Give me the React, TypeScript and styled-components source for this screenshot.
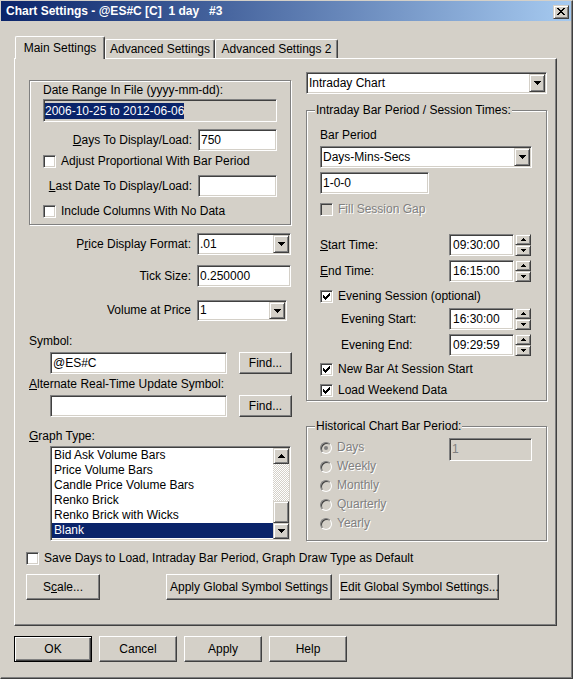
import React from 'react';
import styled, { createGlobalStyle, css } from 'styled-components';

const FACE = '#d4d0c8';
const SHADOW = '#808080';
const DARK = '#404040';
const NAVY = '#0a246a';

const GlobalStyle = createGlobalStyle`
  * { box-sizing: border-box; }
  html, body { margin: 0; padding: 0; background: ${FACE}; }
  body {
    font-family: "Liberation Sans", Arial, sans-serif;
    font-size: 12px;
    line-height: 15px;
    color: #000;
  }
`;

// classic 3D edges
const pushRaised = css`
  border: 1px solid;
  border-color: #fff ${DARK} ${DARK} #fff;
  box-shadow: inset -1px -1px ${SHADOW};
`;
const smallRaised = css`
  border: 1px solid;
  border-color: ${FACE} ${DARK} ${DARK} ${FACE};
  box-shadow: inset 1px 1px #fff, inset -1px -1px ${SHADOW};
`;
const sunken = css`
  border: 1px solid;
  border-color: ${SHADOW} #fff #fff ${SHADOW};
  box-shadow: inset 1px 1px ${DARK}, inset -1px -1px ${FACE};
`;
const etched = css`
  border: 1px solid ${SHADOW};
  box-shadow: inset 1px 1px #fff, 1px 1px #fff;
`;
const grayed = css`
  color: ${SHADOW};
  text-shadow: 1px 1px 0 #fff;
`;

// little bitmaps
const CHECK = ['......x', '.....xx', 'x...xxx', 'xx.xxx.', 'xxxxx..', '.xxx...', '..x....'];
const CLOSE_X = ['xx....xx', '.xx..xx.', '..xxxx..', '...xx...', '..xxxx..', '.xx..xx.', 'xx....xx'];
const ARROW_DOWN = ['xxxxxxx', '.xxxxx.', '..xxx..', '...x...'];
const ARROW_UP = [...ARROW_DOWN].reverse();
const SPIN_UP = ['..x..', '.xxx.', 'xxxxx'];
const SPIN_DOWN = [...SPIN_UP].reverse();

const PixelSvg = styled.svg`
  display: block;
  flex: none;
`;

const Pixels = ({ rows, color = '#000' }: { rows: string[]; color?: string }) => (
  <PixelSvg width={rows[0].length} height={rows.length} shapeRendering="crispEdges">
    {rows.flatMap((r, y) =>
      r.split('').map((c, x) =>
        c === 'x' ? <rect key={`${x}-${y}`} x={x} y={y} width={1} height={1} fill={color} /> : null
      )
    )}
  </PixelSvg>
);

const Window = styled.div`
  width: 573px;
  height: 679px;
  background: ${FACE};
  border-right: 1px solid ${DARK};
  border-bottom: 1px solid ${DARK};
  border-left: 1px solid ${FACE};
  border-top: 1px solid ${FACE};
  box-shadow: inset -1px -1px ${SHADOW};
  padding: 0 1px 1px 0;
  display: flex;
  flex-direction: column;
`;

const TitleBar = styled.div`
  height: 20px;
  flex: none;
  background: linear-gradient(to right, ${NAVY}, #a6caf0);
  display: flex;
  align-items: center;
  justify-content: space-between;
  padding: 1px 2px 0 5px;
`;

const Title = styled.span`
  color: #fff;
  font-weight: bold;
  white-space: pre;
`;

const CloseButton = styled.span`
  ${smallRaised};
  width: 16px;
  height: 14px;
  background: ${FACE};
  display: flex;
  align-items: center;
  justify-content: center;
`;

const Body = styled.div`
  padding: 15px 0 0 13px;
  display: flex;
  flex-direction: column;
`;

const TabStrip = styled.div`
  height: 23px;
  display: flex;
  align-items: flex-end;
  padding-left: 1px;
`;

const Tab = styled.div<{ $active?: boolean; $w: number }>`
  width: ${p => p.$w}px;
  height: ${p => (p.$active ? 23 : 19)}px;
  margin-bottom: ${p => (p.$active ? 0 : 1)}px;
  display: flex;
  align-items: center;
  justify-content: center;
  white-space: nowrap;
  background: ${FACE};
  border-top: 1px solid #fff;
  border-left: 1px solid #fff;
  border-right: 1px solid ${DARK};
  box-shadow: inset -1px 0 ${SHADOW};
  border-radius: 2px 2px 0 0;
  position: relative;
  z-index: ${p => (p.$active ? 1 : 0)};
`;

const Panel = styled.div`
  width: 543px;
  height: 568px;
  margin-top: -1px;
  border: 1px solid;
  border-color: #fff ${DARK} ${DARK} #fff;
  box-shadow: inset -1px -1px ${SHADOW};
  display: flex;
  flex-direction: column;
`;

const Columns = styled.div`
  display: grid;
  grid-template-columns: 262px 241px;
  column-gap: 15px;
  padding-left: 14px;
  align-items: start;
`;

const Column = styled.div<{ $top: number }>`
  display: flex;
  flex-direction: column;
  margin-top: ${p => p.$top}px;
`;

const GroupBox = styled.div<{ $mt?: number; $h: number }>`
  ${etched};
  margin-top: ${p => p.$mt ?? 0}px;
  height: ${p => p.$h}px;
  padding: 0 13px;
  display: flex;
  flex-direction: column;
`;

const Legend = styled.div`
  align-self: flex-start;
  margin: -8px 0 0 -5px;
  padding: 0 1px;
  height: 15px;
  background: ${FACE};
  white-space: nowrap;
`;

const Caption = styled.div<{ $mt: number; $ml?: number }>`
  margin-top: ${p => p.$mt}px;
  margin-left: ${p => p.$ml ?? 0}px;
  height: 15px;
  white-space: nowrap;
`;

const FieldRow = styled.div<{ $mt: number; $ml?: number }>`
  display: flex;
  align-items: center;
  margin-top: ${p => p.$mt}px;
  margin-left: ${p => p.$ml ?? 0}px;
`;

const RightLabel = styled.span<{ $w: number }>`
  flex: none;
  width: ${p => p.$w}px;
  margin-right: 6px;
  text-align: right;
  white-space: nowrap;
`;

const LeftLabel = styled.span<{ $w: number; $indent?: number }>`
  flex: none;
  width: ${p => p.$w}px;
  padding-left: ${p => p.$indent ?? 0}px;
  white-space: nowrap;
`;

const TextBox = styled.div<{
  $w: number;
  $h?: number;
  $mt?: number;
  $pl?: number;
  $face?: boolean;
  $disabled?: boolean;
}>`
  ${sunken};
  flex: none;
  width: ${p => p.$w}px;
  height: ${p => p.$h ?? 22}px;
  margin-top: ${p => p.$mt ?? 0}px;
  padding-left: ${p => p.$pl ?? 2}px;
  background: ${p => (p.$face || p.$disabled ? FACE : '#fff')};
  color: ${p => (p.$disabled ? SHADOW : '#000')};
  display: flex;
  align-items: center;
  white-space: nowrap;
  overflow: hidden;
`;

const Selection = styled.span`
  background: ${NAVY};
  color: #fff;
  line-height: 16px;
`;

const ComboFrame = styled.div<{ $w: number; $h?: number; $mt?: number }>`
  ${sunken};
  flex: none;
  width: ${p => p.$w}px;
  height: ${p => p.$h ?? 22}px;
  margin-top: ${p => p.$mt ?? 0}px;
  padding: 1px;
  background: #fff;
  display: flex;
`;

const ComboText = styled.span`
  flex: 1;
  padding-left: 1px;
  display: flex;
  align-items: center;
  white-space: nowrap;
`;

const DropButton = styled.span`
  ${smallRaised};
  width: 16px;
  flex: none;
  background: ${FACE};
  display: flex;
  align-items: center;
  justify-content: center;
`;

const Combo = ({ value, w, h, mt }: { value: string; w: number; h?: number; mt?: number }) => (
  <ComboFrame $w={w} $h={h} $mt={mt}>
    <ComboText>{value}</ComboText>
    <DropButton>
      <Pixels rows={ARROW_DOWN} />
    </DropButton>
  </ComboFrame>
);

const SpinBox = styled.div`
  display: flex;
  gap: 1px;
  height: 22px;
`;

const SpinButtons = styled.div`
  width: 16px;
  display: flex;
  flex-direction: column;
`;

const SpinButton = styled.span`
  ${smallRaised};
  flex: 1;
  background: ${FACE};
  display: flex;
  align-items: center;
  justify-content: center;
`;

const Spin = ({ value }: { value: string }) => (
  <SpinBox>
    <TextBox $w={65} $pl={3}>{value}</TextBox>
    <SpinButtons>
      <SpinButton>
        <Pixels rows={SPIN_UP} />
      </SpinButton>
      <SpinButton>
        <Pixels rows={SPIN_DOWN} />
      </SpinButton>
    </SpinButtons>
  </SpinBox>
);

const CheckRow = styled.div<{ $mt: number; $ml?: number; $disabled?: boolean }>`
  display: flex;
  align-items: center;
  gap: 5px;
  height: 15px;
  margin-top: ${p => p.$mt}px;
  margin-left: ${p => p.$ml ?? 0}px;
  white-space: nowrap;
  ${p => p.$disabled && grayed};
`;

const CheckBox = styled.span<{ $disabled?: boolean }>`
  ${sunken};
  width: 13px;
  height: 13px;
  flex: none;
  background: ${p => (p.$disabled ? FACE : '#fff')};
  display: flex;
  align-items: center;
  justify-content: center;
`;

const Check = ({
  label,
  checked,
  disabled,
  mt,
  ml,
}: {
  label: string;
  checked?: boolean;
  disabled?: boolean;
  mt: number;
  ml?: number;
}) => (
  <CheckRow $mt={mt} $ml={ml} $disabled={disabled}>
    <CheckBox $disabled={disabled}>{checked && <Pixels rows={CHECK} />}</CheckBox>
    {label}
  </CheckRow>
);

const HistoryBody = styled.div`
  display: flex;
  justify-content: space-between;
  margin-top: 4px;
  padding-right: 1px;
`;

const RadioList = styled.div`
  display: flex;
  flex-direction: column;
`;

const RadioRow = styled.div`
  display: flex;
  align-items: center;
  gap: 5px;
  height: 19px;
  ${grayed};
`;

const RadioCircle = styled.span`
  width: 12px;
  height: 12px;
  flex: none;
  border-radius: 50%;
  border: 1px solid;
  border-color: ${SHADOW} #fff #fff ${SHADOW};
  box-shadow: inset 1px 1px ${DARK};
  background: ${FACE};
  display: flex;
  align-items: center;
  justify-content: center;
`;

const RadioDot = styled.span`
  width: 4px;
  height: 4px;
  border-radius: 50%;
  background: ${SHADOW};
`;

const ListBox = styled.div`
  ${sunken};
  width: 241px;
  height: 95px;
  margin: 2px 0 0 21px;
  padding: 1px;
  background: #fff;
  display: flex;
`;

const ListItems = styled.div`
  flex: 1;
  display: flex;
  flex-direction: column;
  overflow: hidden;
`;

const ListItem = styled.div<{ $selected?: boolean }>`
  height: 15px;
  flex: none;
  padding-left: 2px;
  white-space: nowrap;
  background: ${p => (p.$selected ? NAVY : 'transparent')};
  color: ${p => (p.$selected ? '#fff' : '#000')};
`;

const ScrollBar = styled.div`
  width: 16px;
  flex: none;
  display: flex;
  flex-direction: column;
`;

const ScrollButton = styled.span`
  ${smallRaised};
  height: 16px;
  flex: none;
  background: ${FACE};
  display: flex;
  align-items: center;
  justify-content: center;
`;

const ScrollTrack = styled.div`
  flex: 1;
  display: flex;
  flex-direction: column;
  justify-content: flex-end;
  background: repeating-conic-gradient(#fff 0 25%, ${FACE} 0 50%) 0 0 / 2px 2px;
`;

const ScrollThumb = styled.span`
  ${smallRaised};
  height: 22px;
  background: ${FACE};
`;

const PushButton = styled.button<{ $w: number; $h?: number; $ml?: number; $default?: boolean }>`
  font: inherit;
  color: #000;
  background: ${FACE};
  width: ${p => p.$w}px;
  height: ${p => p.$h ?? 26}px;
  margin-left: ${p => p.$ml ?? 0}px;
  padding: 0;
  flex: none;
  white-space: nowrap;
  ${pushRaised};
  ${p =>
    p.$default &&
    css`
      border: 1px solid #000;
      box-shadow: inset 1px 1px #fff, inset -1px -1px ${DARK}, inset -2px -2px ${SHADOW};
    `}
`;

const PanelButtons = styled.div`
  display: flex;
  margin-top: 8px;
  padding-left: 11px;
`;

const DialogButtons = styled.div`
  display: flex;
  gap: 7px;
  margin-top: 10px;
`;

const graphTypes = [
  'Bid Ask Volume Bars',
  'Price Volume Bars',
  'Candle Price Volume Bars',
  'Renko Brick',
  'Renko Brick with Wicks',
  'Blank',
];

const historyPeriods = ['Days', 'Weekly', 'Monthly', 'Quarterly', 'Yearly'];

export default function App() {
  return (
    <>
      <GlobalStyle />
      <Window>
        <TitleBar>
          <Title>{'Chart Settings - @ES#C [C]  1 day   #3'}</Title>
          <CloseButton>
            <Pixels rows={CLOSE_X} />
          </CloseButton>
        </TitleBar>

        <Body>
          <TabStrip>
            <Tab $active $w={90}>Main Settings</Tab>
            <Tab $w={110}>Advanced Settings</Tab>
            <Tab $w={123}>Advanced Settings 2</Tab>
          </TabStrip>

          <Panel>
            <Columns>
              {/* left column */}
              <Column $top={21}>
                <GroupBox $h={145}>
                  <Caption $mt={2}>Date Range In File (yyyy-mm-dd):</Caption>
                  <TextBox $w={234} $h={23} $mt={1} $pl={1} $face>
                    <Selection>2006-10-25 to 2012-06-06</Selection>
                  </TextBox>
                  <FieldRow $mt={7}>
                    <RightLabel $w={149}>
                      <u>D</u>ays To Display/Load:
                    </RightLabel>
                    <TextBox $w={79}>750</TextBox>
                  </FieldRow>
                  <Check mt={3} label="Adjust Proportional With Bar Period" />
                  <FieldRow $mt={6}>
                    <RightLabel $w={149}>
                      <u>L</u>ast Date To Display/Load:
                    </RightLabel>
                    <TextBox $w={79} />
                  </FieldRow>
                  <Check mt={7} label="Include Columns With No Data" />
                </GroupBox>

                <FieldRow $mt={8}>
                  <RightLabel $w={162}>
                    P<u>r</u>ice Display Format:
                  </RightLabel>
                  <Combo value=".01" w={94} />
                </FieldRow>
                <FieldRow $mt={10}>
                  <RightLabel $w={162}>Tick Size:</RightLabel>
                  <TextBox $w={94}>0.250000</TextBox>
                </FieldRow>
                <FieldRow $mt={13}>
                  <RightLabel $w={162}>Volume at Price</RightLabel>
                  <Combo value="1" w={90} h={21} />
                </FieldRow>

                <Caption $mt={13}>Symbol:</Caption>
                <FieldRow $mt={3} $ml={21}>
                  <TextBox $w={177}>@ES#C</TextBox>
                  <PushButton $w={53} $h={22} $ml={12}>Find...</PushButton>
                </FieldRow>
                <Caption $mt={3}>
                  <u>A</u>lternate Real-Time Update Symbol:
                </Caption>
                <FieldRow $mt={3} $ml={21}>
                  <TextBox $w={177} />
                  <PushButton $w={53} $h={22} $ml={12}>Find...</PushButton>
                </FieldRow>

                <Caption $mt={12}>
                  <u>G</u>raph Type:
                </Caption>
                <ListBox>
                  <ListItems>
                    {graphTypes.map(t => (
                      <ListItem key={t} $selected={t === 'Blank'}>
                        {t}
                      </ListItem>
                    ))}
                  </ListItems>
                  <ScrollBar>
                    <ScrollButton>
                      <Pixels rows={ARROW_UP} />
                    </ScrollButton>
                    <ScrollTrack>
                      <ScrollThumb />
                    </ScrollTrack>
                    <ScrollButton>
                      <Pixels rows={ARROW_DOWN} />
                    </ScrollButton>
                  </ScrollBar>
                </ListBox>
              </Column>

              {/* right column */}
              <Column $top={13}>
                <Combo value="Intraday Chart" w={241} />

                <GroupBox $mt={16} $h={291}>
                  <Legend>Intraday Bar Period / Session Times:</Legend>
                  <Caption $mt={10}>Bar Period</Caption>
                  <Combo value="Days-Mins-Secs" w={212} mt={3} />
                  <TextBox $w={109} $mt={4}>1-0-0</TextBox>
                  <Check mt={8} label="Fill Session Gap" disabled />
                  <FieldRow $mt={17}>
                    <LeftLabel $w={129}>
                      <u>S</u>tart Time:
                    </LeftLabel>
                    <Spin value="09:30:00" />
                  </FieldRow>
                  <FieldRow $mt={4}>
                    <LeftLabel $w={129}>
                      <u>E</u>nd Time:
                    </LeftLabel>
                    <Spin value="16:15:00" />
                  </FieldRow>
                  <Check mt={7} label="Evening Session (optional)" checked />
                  <FieldRow $mt={4}>
                    <LeftLabel $w={129} $indent={21}>Evening Start:</LeftLabel>
                    <Spin value="16:30:00" />
                  </FieldRow>
                  <FieldRow $mt={4}>
                    <LeftLabel $w={129} $indent={21}>Evening End:</LeftLabel>
                    <Spin value="09:29:59" />
                  </FieldRow>
                  <Check mt={6} label="New Bar At Session Start" checked />
                  <Check mt={6} label="Load Weekend Data" checked />
                </GroupBox>

                <GroupBox $mt={25} $h={115}>
                  <Legend>Historical Chart Bar Period:</Legend>
                  <HistoryBody>
                    <RadioList>
                      {historyPeriods.map(p => (
                        <RadioRow key={p}>
                          <RadioCircle>{p === 'Days' && <RadioDot />}</RadioCircle>
                          {p}
                        </RadioRow>
                      ))}
                    </RadioList>
                    <TextBox $w={83} $h={23} $disabled>
                      1
                    </TextBox>
                  </HistoryBody>
                </GroupBox>
              </Column>
            </Columns>

            <Check
              mt={10}
              ml={11}
              label="Save Days to Load, Intraday Bar Period, Graph Draw Type as Default"
            />
            <PanelButtons>
              <PushButton $w={74}>
                S<u>c</u>ale...
              </PushButton>
              <PushButton $w={166} $ml={66}>Apply Global Symbol Settings</PushButton>
              <PushButton $w={160} $ml={7}>Edit Global Symbol Settings...</PushButton>
            </PanelButtons>
          </Panel>

          <DialogButtons>
            <PushButton $w={78} $default>OK</PushButton>
            <PushButton $w={78}>Cancel</PushButton>
            <PushButton $w={78}>Apply</PushButton>
            <PushButton $w={78}>Help</PushButton>
          </DialogButtons>
        </Body>
      </Window>
    </>
  );
}
